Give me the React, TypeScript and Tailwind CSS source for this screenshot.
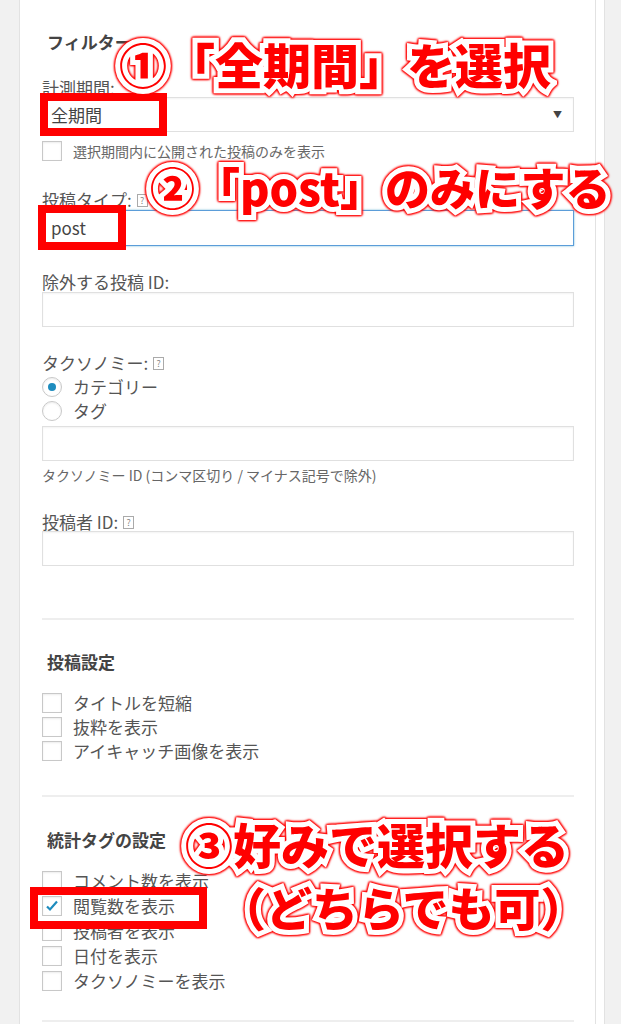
import React from "react";

function Help() {
  return (
    <span className="ml-[5px] inline-flex h-[13px] w-[11px] items-center justify-center border border-[#aaa] text-[9px] leading-none text-[#888]">
      ?
    </span>
  );
}

function Label({ children, help }: { children: React.ReactNode; help?: boolean }) {
  return (
    <div className="flex h-[18px] items-center text-[17px] leading-[18px] text-[#555]">
      {children}
      {help && <Help />}
    </div>
  );
}

function TextBox({ value, focus }: { value?: string; focus?: boolean }) {
  return (
    <div
      className={
        focus
          ? "flex h-[36px] items-center border border-[#5b9dd9] px-[8px] text-[17px] text-[#444] shadow-[0_0_2px_rgba(30,140,190,0.6)]"
          : "flex h-[35px] items-center border border-[#e0e0e0] px-[8px] text-[17px] text-[#444] shadow-[inset_0_1px_2px_rgba(0,0,0,0.05)]"
      }
    >
      {value}
    </div>
  );
}

function Check({ label, checked, small, h = "h-[24px]" }: { label: string; checked?: boolean; small?: boolean; h?: string }) {
  return (
    <div className={`flex items-center ${h}`}>
      <span className="flex h-[20px] w-[20px] shrink-0 items-center justify-center border border-[#c8c8c8] bg-white shadow-[inset_0_1px_2px_rgba(0,0,0,0.08)]">
        {checked && (
          <svg width="16" height="16" viewBox="0 0 16 16">
            <path d="M3 8.5l3 3 7-8" fill="none" stroke="#1e8cbe" strokeWidth="2.2" />
          </svg>
        )}
      </span>
      <span className={small ? "ml-[11px] text-[14px] text-[#666]" : "ml-[11px] text-[17px] text-[#555]"}>{label}</span>
    </div>
  );
}

function Radio({ label, checked }: { label: string; checked?: boolean }) {
  return (
    <div className="flex h-[24px] items-center">
      <span className="flex h-[20px] w-[20px] items-center justify-center rounded-full border border-[#c8c8c8] shadow-[inset_0_1px_2px_rgba(0,0,0,0.08)]">
        {checked && <span className="h-[8px] w-[8px] rounded-full bg-[#1e8cbe]" />}
      </span>
      <span className="ml-[11px] text-[17px] text-[#555]">{label}</span>
    </div>
  );
}

// red text with white outline + thin red rim
const note =
  "absolute whitespace-nowrap font-black leading-none text-[#ff0000] [paint-order:stroke_fill] [-webkit-text-stroke:10px_#fff] [filter:drop-shadow(0_0_1px_#f00)_drop-shadow(0_0_1px_#f00)_drop-shadow(0_0_0.5px_#f00)]";

export default function App() {
  return (
    <div className="relative h-[1024px] w-[621px] overflow-hidden bg-[#f1f1f1] font-['Noto_Sans_CJK_JP',sans-serif]">
      <div className="flex h-full">
        <div className="w-[19px]" />
        <div className="w-[577px] border-x border-[#e2e2e2] bg-white pl-[22px] pr-[21px] pt-[30px]">
          <h3 className="h-[24px] pl-[5px] text-[17px] font-semibold leading-[24px] text-[#444]">フィルター</h3>

          <div className="mt-[25px]">
            <Label>計測期間:</Label>
          </div>
          <div className="flex h-[35px] items-center justify-between border border-[#e0e0e0] pl-[8px] pr-[11px] text-[17px] text-[#444] shadow-[inset_0_1px_2px_rgba(0,0,0,0.05)]">
            <span>全期間</span>
            <span className="text-[9px] text-[#444]">▼</span>
          </div>
          <div className="mt-[9px]">
            <Check label="選択期間内に公開された投稿のみを表示" small h="h-[20px]" />
          </div>

          <div className="mt-[30px]">
            <Label help>投稿タイプ:</Label>
          </div>
          <div className="mt-px">
            <TextBox value="post" focus />
          </div>

          <div className="mt-[27px]">
            <Label>除外する投稿 ID:</Label>
          </div>
          <div className="mt-px">
            <TextBox />
          </div>

          <div className="mt-[27px]">
            <Label help>タクソノミー:</Label>
          </div>
          <div className="mt-[3px]">
            <Radio label="カテゴリー" checked />
            <Radio label="タグ" />
          </div>
          <div className="mt-[3px]">
            <TextBox />
          </div>
          <div className="mt-[5px] h-[18px] text-[14px] leading-[18px] text-[#666]">
            タクソノミー ID (コンマ区切り / マイナス記号で除外)
          </div>

          <div className="mt-[29px]">
            <Label help>投稿者 ID:</Label>
          </div>
          <TextBox />

          <div className="mt-[52px] border-t-2 border-[#eeeeee]" />

          <h3 className="mt-[30px] h-[24px] pl-[5px] text-[17px] font-bold leading-[24px] text-[#444]">投稿設定</h3>
          <div className="mt-[17px]">
            <Check label="タイトルを短縮" />
            <Check label="抜粋を表示" />
            <Check label="アイキャッチ画像を表示" />
          </div>

          <div className="mt-[32px] border-t-2 border-[#eeeeee]" />

          <h3 className="mt-[31px] h-[24px] pl-[5px] text-[17px] font-bold leading-[24px] text-[#444]">統計タグの設定</h3>
          <div className="mt-[16px]">
            <Check label="コメント数を表示" h="h-[25px]" />
            <Check label="閲覧数を表示" checked h="h-[25px]" />
            <Check label="投稿者を表示" h="h-[25px]" />
            <Check label="日付を表示" h="h-[25px]" />
            <Check label="タクソノミーを表示" h="h-[25px]" />
          </div>

          <div className="mt-[27px] border-t-2 border-[#eeeeee]" />
        </div>
        <div className="w-[9px] border-r border-[#e2e2e2] bg-white" />
      </div>

      {/* red highlight boxes */}
      <div className="absolute left-[40px] top-[93px] h-[43px] w-[127px] border-[8px] border-[#ff0000]" />
      <div className="absolute left-[38px] top-[205px] h-[45px] w-[88px] border-[8px] border-[#ff0000]" />
      <div className="absolute left-[30px] top-[887px] h-[42px] w-[177px] border-[8px] border-[#ff0000]" />

      {/* annotations */}
      <div className={`${note} left-[119px] top-[39px] text-[48px]`}>①「全期間」を選択</div>
      <div className={`${note} left-[150px] top-[164px] text-[45px]`}>②「post」のみにする</div>
      <div className={`${note} left-[185px] top-[819px] text-[48px]`}>③好みで選択する</div>
      <div className={`${note} left-[220px] top-[883px] text-[46px]`}>（どちらでも可）</div>
    </div>
  );
}
